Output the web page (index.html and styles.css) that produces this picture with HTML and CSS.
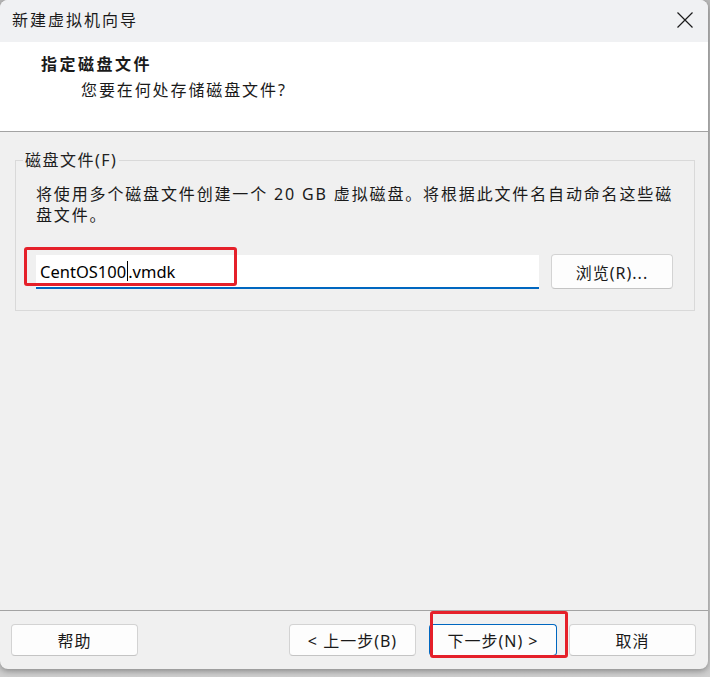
FILE: index.html
```html
<!DOCTYPE html>
<html lang="zh-CN">
<head>
<meta charset="utf-8">
<title>新建虚拟机向导</title>
<link rel="stylesheet" href="styles.css">
</head>
<body>
<div class="window">
  <div class="titlebar">
    <span class="title">新建虚拟机向导</span>
    <svg class="close" width="16" height="16" viewBox="0 0 16 16"><path d="M0.5 0.5 L15.5 15.5 M15.5 0.5 L0.5 15.5" stroke="#1b1b1b" stroke-width="1.2" fill="none"/></svg>
  </div>
  <div class="header">
    <div class="h-title">指定磁盘文件</div>
    <div class="h-sub">您要在何处存储磁盘文件?</div>
  </div>
  <div class="main">
    <fieldset class="group">
      <legend class="legend">磁盘文件(F)</legend>
      <p class="desc">将使用多个磁盘文件创建一个 20 GB 虚拟磁盘。将根据此文件名自动命名这些磁盘文件。</p>
      <div class="row">
        <div class="input"><span>CentOS100</span><span class="caret"></span><span>.vmdk</span></div>
        <button class="btn browse">浏览(R)...</button>
        <div class="mark mark-input"></div>
      </div>
    </fieldset>
  </div>
  <div class="footer">
    <button class="btn fbtn">帮助</button>
    <div class="spacer"></div>
    <button class="btn fbtn">&lt; 上一步(B)</button>
    <button class="btn fbtn primary">下一步(N) &gt;</button>
    <button class="btn fbtn">取消</button>
    <div class="mark mark-next"></div>
  </div>
</div>
</body>
</html>
```
FILE: styles.css
```css
html, body {
  margin: 0;
  padding: 0;
}
body {
  width: 710px;
  height: 677px;
  background: linear-gradient(#b9b9b9, #cfcfcf);
  font-family: "Noto Sans", "Noto Sans CJK SC", sans-serif;
  color: #1a1a1a;
  overflow: hidden;
}
.window {
  width: 708px;
  height: 669px;
  background: #f0f0f0;
  border-radius: 8px;
  overflow: hidden;
  display: flex;
  flex-direction: column;
  box-shadow: 0 2px 6px rgba(0, 0, 0, 0.35);
}
.titlebar {
  height: 42px;
  flex: none;
  background: #f0f1f3;
  display: flex;
  align-items: center;
  padding: 0 15px 0 12px;
  box-sizing: border-box;
}
.title {
  font-size: 16px;
  letter-spacing: 2px;
  flex: 1;
  line-height: 20px;
  margin-top: -3px;
}
.close {
  margin-top: -3px;
}
.header {
  height: 90px;
  flex: none;
  box-sizing: border-box;
  background: #fff;
  border-bottom: 1px solid #a3a3a3;
  padding: 12px 0 0 41px;
}
.h-title {
  font-size: 16px;
  font-weight: bold;
  letter-spacing: 2.5px;
  line-height: 20px;
}
.h-sub {
  font-size: 16px;
  letter-spacing: 1.9px;
  line-height: 20px;
  margin: 6px 0 0 40px;
}
.main {
  flex: 1;
  padding: 18px 13px 0 15px;
}
.group {
  margin: 0;
  padding: 0 21px 21px 20px;
  border: 1px solid #d9d9d9;
  min-width: 0;
}
.legend {
  font-size: 16px;
  letter-spacing: 1.5px;
  line-height: 20px;
  padding: 0 2px;
  margin-left: -13px;
  color: #222;
}
.desc {
  margin: 14px 0 0 0;
  font-size: 16px;
  line-height: 21px;
  letter-spacing: 1.85px;
}
.row {
  position: relative;
  display: flex;
  gap: 12px;
  margin-top: 28px;
  align-items: flex-start;
}
.input {
  width: 503px;
  height: 34px;
  box-sizing: border-box;
  background: #fff;
  border-bottom: 2px solid #0067c0;
  margin-top: 1px;
  padding-left: 4px;
  display: flex;
  align-items: center;
  font-size: 16.5px;
  color: #000;
}
.caret {
  width: 1px;
  height: 20px;
  background: #000;
  margin: 0 0 0 1px;
}
.btn {
  font-family: "Noto Sans", "Noto Sans CJK SC", sans-serif;
  font-size: 16px;
  letter-spacing: 1px;
  color: #1a1a1a;
  background: #fdfdfd;
  border: 1px solid #d3d3d3;
  border-bottom-color: #c4c4c4;
  border-radius: 4px;
  padding: 0;
  box-sizing: border-box;
}
.browse {
  width: 122px;
  height: 35px;
}
.mark {
  position: absolute;
  border: 3px solid #e5202a;
  border-radius: 3px;
  box-sizing: border-box;
}
.mark-input {
  left: -12px;
  top: -7px;
  width: 213px;
  height: 39px;
}
.footer {
  position: relative;
  flex: none;
  height: 59px;
  box-sizing: border-box;
  border-top: 1px solid #a3a3a3;
  padding: 13px 12px 13px 11px;
  display: flex;
  gap: 12px;
}
.spacer {
  flex: 1;
}
.fbtn {
  width: 127px;
  height: 32px;
}
.primary {
  width: 128px;
  margin-left: 1px;
  border-color: #0067c0;
  border-bottom-color: #003e73;
}
.mark-next {
  left: 430px;
  top: 0;
  width: 138px;
  height: 47px;
}
```
